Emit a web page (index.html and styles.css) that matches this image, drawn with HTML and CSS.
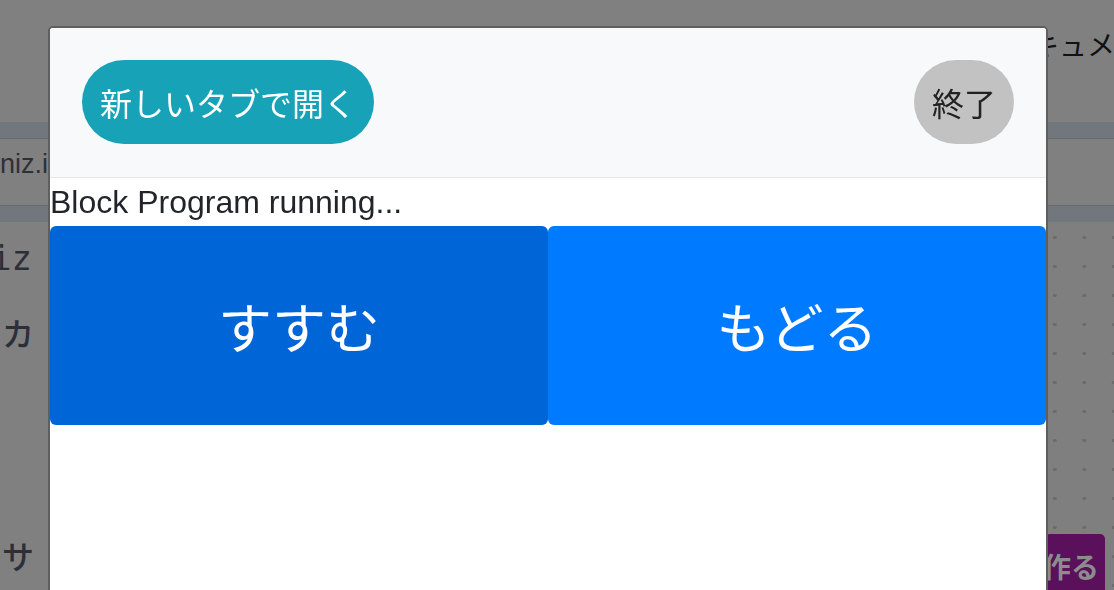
FILE: index.html
```html
<!DOCTYPE html>
<html lang="ja">
<head>
<meta charset="utf-8">
<title>Block Program</title>
<link rel="stylesheet" href="styles.css">
</head>
<body>
<div class="page">
  <header class="topbar"><span class="doc">ドキュメント</span></header>
  <div class="strip"></div>
  <div class="urlrow"><span class="url">eniz.io</span></div>
  <div class="strip strip-b"></div>
  <div class="main">
    <aside class="side">
      <div class="code">iz</div>
      <div class="kana ka">カ</div>
      <div class="kana sa">サ</div>
    </aside>
    <section class="workspace">
      <button class="make">作る</button>
    </section>
  </div>
</div>

<div class="modal">
  <div class="modal-header">
    <button class="pill pill-teal">新しいタブで開く</button>
    <button class="pill pill-gray">終了</button>
  </div>
  <div class="modal-body">
    <p class="status">Block Program running...</p>
    <div class="controls">
      <button class="ctrl ctrl-next">すすむ</button>
      <button class="ctrl ctrl-back">もどる</button>
    </div>
  </div>
</div>
</body>
</html>
```

FILE: styles.css
```css
* { box-sizing: border-box; }

html, body {
  margin: 0;
  padding: 0;
  width: 1114px;
  height: 590px;
  overflow: hidden;
}

body {
  font-family: "Liberation Sans", "Noto Sans CJK JP", sans-serif;
  background: #808080;
}

/* ---------- dimmed background page ---------- */
.page {
  display: flex;
  flex-direction: column;
  height: 590px;
  overflow: hidden;
  background: #808080;
}

.topbar {
  height: 122px;
  padding: 24px 0 0 1003px;
  white-space: nowrap;
  overflow: hidden;
  flex: none;
}

.doc {
  font-family: "Noto Sans CJK JP", sans-serif;
  font-size: 28px;
  line-height: 40px;
  color: #111;
}

.strip {
  height: 17px;
  background: #71777d;
  border-bottom: 1px solid #676b6f;
  flex: none;
}

.strip-b {
  border-bottom: none;
  border-top: 1px solid #676b6f;
}

.urlrow {
  height: 66px;
  padding-top: 5px;
  white-space: nowrap;
  overflow: hidden;
  flex: none;
}

.url {
  display: inline-block;
  margin-left: -15px;
  font-family: "Liberation Sans", sans-serif;
  font-size: 27px;
  line-height: 40px;
  color: #2e3136;
}

.main {
  flex: 1;
  display: flex;
  min-height: 0;
}

.side {
  width: 400px;
  flex: none;
  display: flex;
  flex-direction: column;
  color: #2c2f38;
}

.code {
  font-family: "DejaVu Sans Mono", monospace;
  font-size: 34px;
  line-height: 40px;
  margin: 16px 0 0 -9px;
}

.kana {
  font-family: "Noto Sans CJK JP", sans-serif;
  font-size: 32px;
  line-height: 40px;
  font-weight: 500;
}

.ka { margin-top: 34px; margin-left: 2px; }
.sa { margin-top: auto; margin-bottom: 15px; margin-left: 2px; }

.workspace {
  flex: 1;
  display: flex;
  flex-direction: column;
  align-items: flex-end;
  background-color: #7f7f7f;
  background-image: radial-gradient(circle, #6b6b6b 1.6px, transparent 2px);
  background-size: 29.5px 29px;
  background-position: -9px 1px;
}

.make {
  margin-top: auto;
  margin-right: 9px;
  margin-bottom: -8px;
  width: 60px;
  height: 64px;
  border: none;
  border-radius: 5px;
  background: #5a105a;
  color: #8c8c8c;
  font-family: "Noto Sans CJK JP", sans-serif;
  font-weight: 700;
  font-size: 28px;
  padding: 0;
  text-align: left;
  text-indent: -2px;
  white-space: nowrap;
  overflow: hidden;
}

/* ---------- modal ---------- */
.modal {
  position: fixed;
  left: 48px;
  top: 26px;
  width: 1000px;
  height: 600px;
  border: 2px solid #5f5f5f;
  border-radius: 5px;
  background: #fff;
  overflow: hidden;
}

.modal-header {
  display: flex;
  justify-content: space-between;
  align-items: center;
  padding: 32px 32px 33px;
  background: #f8f9fa;
  border-bottom: 1px solid #e3e6ea;
}

.pill {
  border: none;
  border-radius: 999px;
  font-family: "Noto Sans CJK JP", sans-serif;
  font-size: 32px;
  line-height: 46px;
  padding: 19px 18px;
  cursor: pointer;
}

.pill-teal {
  background: #17a2b8;
  color: #fff;
}

.pill-gray {
  background: #c2c2c2;
  color: #222;
}

.status {
  margin: 0;
  font-family: "Liberation Sans", sans-serif;
  font-size: 32px;
  line-height: 48px;
  color: #212529;
}

.controls {
  display: grid;
  grid-template-columns: 1fr 1fr;
  height: 199px;
}

.ctrl {
  border: none;
  border-radius: 6px;
  color: #fff;
  font-family: "Noto Sans CJK JP", sans-serif;
  font-size: 54px;
  cursor: pointer;
}

.ctrl-next { background: #0065d6; }
.ctrl-back { background: #007bff; }
```
